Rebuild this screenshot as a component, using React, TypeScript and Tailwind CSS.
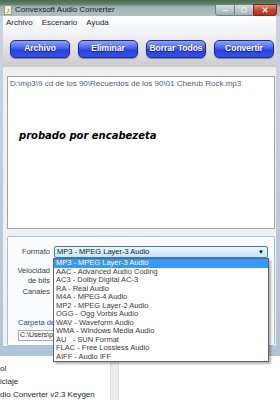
import { X, Minus, Square } from 'lucide-react';

const FORMATS = [
  'MP3 - MPEG Layer-3 Audio',
  'AAC - Advanced Audio Coding',
  'AC3 - Dolby Digital AC-3',
  'RA - Real Audio',
  'M4A - MPEG-4 Audio',
  'MP2 - MPEG Layer-2 Audio',
  'OGG - Ogg Vorbis Audio',
  'WAV - Waveform Audio',
  'WMA - Windows Media Audio',
  'AU   - SUN Format',
  'FLAC - Free Lossless Audio',
  'AIFF - Audio IFF',
];

const BUTTONS = ['Archivo', 'Eliminar', 'Borrar Todos', 'Convertir'];

function TitleBar() {
  return (
    <div className="h-[22px] flex items-center bg-[linear-gradient(to_bottom,#4d6a4f_0px,#5f7d6a_4px,#9fb5b3_7px,#aec1c0_100%)] pl-[4px] pr-[3px]">
      {/* app icon */}
      <div className="w-[8px] h-[10px] mt-[3px] bg-[#f3f0d8] border border-[#9a9a7a] flex items-center justify-center">
        <span className="text-[8px] leading-none text-[#2f9a2a] font-bold">♪</span>
      </div>
      <span className="ml-[3px] mt-[3px] text-[8px] text-[#1a1a1a] font-['Liberation_Sans',sans-serif]">
        Convexsoft Audio Converter
      </span>
      <div className="ml-auto flex self-start mt-[4px]">
        <div className="w-[20px] h-[12px] border border-[#6f8585] rounded-bl-[3px] bg-[linear-gradient(to_bottom,#d2dede,#9fb3b3)] flex items-center justify-center">
          <Minus size={7} strokeWidth={3} className="text-white" />
        </div>
        <div className="w-[18px] h-[12px] border-y border-[#6f8585] bg-[linear-gradient(to_bottom,#d2dede,#9fb3b3)] flex items-center justify-center">
          <Square size={6} strokeWidth={2.5} className="text-white" />
        </div>
        <div className="w-[24px] h-[12px] border border-[#7a2a20] rounded-br-[3px] bg-[linear-gradient(to_bottom,#e8907c,#c8432f_50%,#b8301c)] flex items-center justify-center">
          <X size={8} strokeWidth={3.5} className="text-white" />
        </div>
      </div>
    </div>
  );
}

function MenuBar() {
  return (
    <div className="h-[14px] flex items-center gap-[9px] pl-[3px] bg-[linear-gradient(to_bottom,#ffffff,#f1f4f8)] text-[8px] text-[#1e1e1e] font-['Liberation_Sans',sans-serif]">
      <span>Archivo</span>
      <span>Escenario</span>
      <span>Ayuda</span>
    </div>
  );
}

function Toolbar() {
  return (
    <div className="h-[40px] flex items-center gap-[8px] pl-[7px] border-b-[3px] border-[#ececec] bg-[linear-gradient(to_bottom,#f6f6f6,#cbcbcb)]">
      {BUTTONS.map((label) => (
        <div
          key={label}
          className="w-[60px] h-[18px] rounded-[5px] border border-[#1b2b98] shadow-[0_1px_1px_rgba(0,0,0,0.35)] bg-[linear-gradient(to_bottom,#8ea3f8_0%,#4e6cf2_40%,#2a44e0_55%,#3150ea_100%)] flex items-center justify-center"
        >
          <span className="text-[8.5px] font-bold text-white [text-shadow:0_1px_1px_rgba(0,0,60,0.6)] font-['Liberation_Sans',sans-serif] whitespace-nowrap">
            {label}
          </span>
        </div>
      ))}
    </div>
  );
}

function FileList() {
  return (
    <div className="h-[153px] bg-white border border-[#a3a3a3] pl-[2px] pt-[2px]">
      <div className="text-[8px] leading-[9px] text-[#4a5a86] font-['Liberation_Sans',sans-serif] whitespace-nowrap">
        D:\mp3\9 cd de los 90\Recuerdos de los 90\01 Cherub Rock.mp3
      </div>
      <div className="mt-[42px] ml-[9px] text-[10px] leading-[12px] font-bold italic text-black font-['DejaVu_Sans',sans-serif]">
        probado por encabezeta
      </div>
    </div>
  );
}

function OptionsBox() {
  return (
    <div className="relative h-[110px] bg-[#fbfcfe] border border-[#9fc2e0] rounded-[2px] font-['Liberation_Sans',sans-serif] text-[7.5px] text-[#3c3c3c]">
      <div className="flex items-center mt-[9px]">
        <span className="w-[42px] text-right leading-[12px]">Formato</span>
        <div className="ml-[4px] mr-[6px] flex-1 h-[12px] border border-[#3d7fb3] rounded-[2px] bg-[linear-gradient(to_bottom,#eaf6fd,#c6e5f7)] flex items-center pl-[2px] pr-[3px]">
          <span className="text-[#1e1e1e]">MP3 - MPEG Layer-3 Audio</span>
          <span className="ml-auto text-[6px] text-black">▼</span>
        </div>
      </div>
      <div className="mt-[8px] w-[42px] text-right leading-[10px]">
        <div>Velocidad</div>
        <div>de bits</div>
      </div>
      <div className="mt-[1px] w-[42px] text-right leading-[10px]">Canales</div>
      <div className="mt-[21px] ml-[10px] leading-[10px] text-[#2e3db3]">Carpeta de</div>
      <div className="mt-[2px] ml-[10px] mr-[40px] h-[11px] bg-white border border-[#a5acb5] pl-[1px] flex items-center text-[#1e1e1e] text-[7px]">
        <span className="whitespace-nowrap">C:\Users\p</span>
      </div>

      {/* open combo list */}
      <div className="absolute left-[45px] top-[21px] w-[216px] bg-white border border-[#646464] shadow-[2px_2px_2px_rgba(0,0,0,0.3)] text-[#3a3a3a]">
        {FORMATS.map((f, i) => (
          <div
            key={f}
            className={
              i === 0
                ? 'h-[8.5px] leading-[8.5px] pl-[2px] bg-[#3399ff] text-white whitespace-pre'
                : 'h-[8.5px] leading-[8.5px] pl-[2px] whitespace-pre'
            }
          >
            {f}
          </div>
        ))}
      </div>
    </div>
  );
}

function Explorer() {
  return (
    <div className="flex-1 flex bg-white font-['Liberation_Sans',sans-serif] text-[8px] text-[#1e1e1e]">
      <div className="w-[110px] pt-[8px] flex flex-col gap-[3px] leading-[10px] whitespace-nowrap overflow-hidden">
        <span>ol</span>
        <span>iclaje</span>
        <span>dio Converter v2.3 Keygen</span>
      </div>
      <div className="w-[9px] bg-[#ececec] border-x border-[#e0e0e0]" />
      <div className="flex-1" />
    </div>
  );
}

export default function App() {
  return (
    <div className="w-[280px] h-[400px] overflow-hidden flex flex-col bg-white">
      <TitleBar />
      <div className="flex bg-[linear-gradient(to_bottom,#c8d6e3,#b3c3d6)] pl-[3px] pr-[4px] pb-[10px]">
        <div className="flex-1 flex flex-col bg-[#f0f0f0]">
          <MenuBar />
          <Toolbar />
          <div className="pl-[4px] pr-[1px] pt-[6px]">
            <FileList />
          </div>
          <div className="pl-[4px] pr-[1px] pt-[7px]">
            <OptionsBox />
          </div>
        </div>
      </div>
      <Explorer />
    </div>
  );
}
